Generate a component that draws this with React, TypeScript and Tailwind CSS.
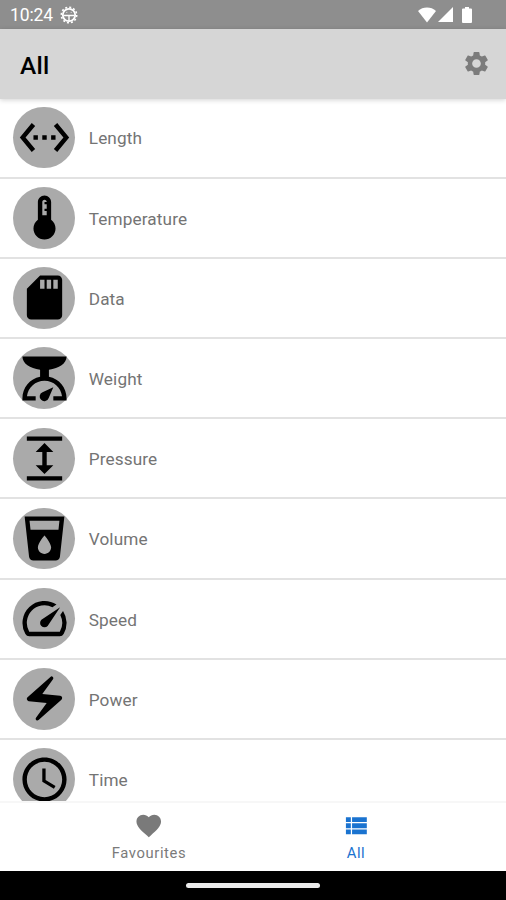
import type { ElementType } from 'react';
import {
  MdAccessTime,
  MdDeviceThermostat,
  MdElectricBolt,
  MdExpand,
  MdFavorite,
  MdLocalDrink,
  MdSdCard,
  MdSettings,
  MdSettingsEthernet,
  MdSpeed,
} from 'react-icons/md';

function ScaleIcon({ className }: { className?: string }) {
  return (
    <svg viewBox="0 0 24 24" fill="currentColor" className={className}>
      <path d="M2 2h20c0 3.2-3.4 5.4-8 6v3.2c4.6.9 8 4.9 8 9.8v1h-6v-2h3.94C19.44 16 16.1 13 12 13s-7.44 3-7.94 7H8v2H2v-1c0-4.9 3.4-8.9 8-9.800V8C5.4 7.4 2 5.2 2 2z" />
      <path d="M16 16l-2.1 4.8a2.1 2.1 0 1 1-2.8-2.6z" />
    </svg>
  );
}

function ListIcon({ className }: { className?: string }) {
  return (
    <svg viewBox="0 0 24 24" fill="currentColor" className={className}>
      <path d="M4 14h4v-4H4v4zm0 5h4v-4H4v4zM4 9h4V5H4v4zm5 5h12v-4H9v4zm0 5h12v-4H9v4zM9 5v4h12V5H9z" />
    </svg>
  );
}

const units: Array<{ label: string; icon: ElementType }> = [
  { label: 'Length', icon: MdSettingsEthernet },
  { label: 'Temperature', icon: MdDeviceThermostat },
  { label: 'Data', icon: MdSdCard },
  { label: 'Weight', icon: ScaleIcon },
  { label: 'Pressure', icon: MdExpand },
  { label: 'Volume', icon: MdLocalDrink },
  { label: 'Speed', icon: MdSpeed },
  { label: 'Power', icon: MdElectricBolt },
  { label: 'Time', icon: MdAccessTime },
];

function StatusBar() {
  return (
    <div className="flex h-[29px] shrink-0 items-center bg-[#8e8e8e] pl-2.5 pr-[34px] text-white">
      <span className="pt-[3px] text-[17.5px] leading-none tracking-[-0.1px]">10:24</span>
      <svg viewBox="0 0 18 18" className="ml-[7px] size-[18px]" fill="none" stroke="currentColor">
        <circle cx="9" cy="9" r="7.7" strokeWidth="1.6" strokeDasharray="2 2.03" />
        <circle cx="9" cy="9" r="6.2" strokeWidth="1.8" />
        <path d="M3.5 9.5h11M9 9.5v6" strokeWidth="1.4" />
        <path d="M6.3 6.4h1M10.7 6.4h1" strokeWidth="0.8" />
      </svg>
      <div className="ml-auto flex items-center">
        <svg viewBox="0 0 18 16" className="h-4 w-[18px]" fill="currentColor">
          <path d="M0 4a13.5 13.5 0 0 1 18 0L9 15.5z" />
        </svg>
        <svg viewBox="0 0 15 15" className="ml-[2px] size-[15px]" fill="currentColor">
          <path d="M15 0v15H0z" />
        </svg>
        <svg viewBox="0 0 10 16" className="ml-[9px] h-4 w-2.5" fill="currentColor">
          <path d="M3 0h4v1.6h2a1 1 0 0 1 1 1V15a1 1 0 0 1-1 1H1a1 1 0 0 1-1-1V2.6a1 1 0 0 1 1-1h2z" />
        </svg>
      </div>
    </div>
  );
}

export default function App() {
  return (
    <main className="flex h-[900px] w-[506px] flex-col overflow-hidden bg-white font-[Roboto,sans-serif]">
      <StatusBar />

      <header className="z-10 flex h-[69.5px] shrink-0 items-center justify-between bg-[#d6d6d6] pl-5 pr-[15.5px] shadow-[0_1px_5px_rgba(0,0,0,0.18)]">
        <h1 className="pt-1 text-[24.5px] font-medium leading-none tracking-[0.3px] text-black">All</h1>
        <button aria-label="Settings">
          <MdSettings className="size-[29px] text-[#7c7c7c]" />
        </button>
      </header>

      <ul className="min-h-0 flex-1 overflow-hidden">
        {units.map(({ label, icon: Icon }) => (
          <li key={label} className="flex h-[80.2px] items-center border-b-2 border-[#e2e2e2] pl-[13.25px]">
            <div className="flex size-[61.5px] shrink-0 items-center justify-center rounded-full bg-[#aaaaaa] text-black">
              <Icon className="size-[53px]" />
            </div>
            <span className="ml-3.5 pt-[3px] text-[17.2px] leading-none tracking-[0.12px] text-[#747474]">{label}</span>
          </li>
        ))}
      </ul>

      {/* Bottom tabs */}
      <nav className="flex h-[70px] shrink-0 justify-center border-t-2 border-[#f7f7f7] bg-white pr-px text-[14.8px] leading-none tracking-[0.6px]">
        <button className="flex w-[207px] flex-col items-center pt-[8.5px] text-[#7a7a7a]">
          <MdFavorite className="size-[29.5px]" />
          <span className="mt-[5.5px]">Favourites</span>
        </button>
        <button className="flex w-[207px] flex-col items-center pt-[8.5px] text-[#1a73d0]">
          <ListIcon className="size-[29.5px]" />
          <span className="mt-[5.5px]">All</span>
        </button>
      </nav>

      <div className="flex h-[29.5px] shrink-0 items-center justify-center bg-black">
        <div className="h-[5px] w-[134px] rounded-full bg-[#ebebeb]" />
      </div>
    </main>
  );
}
